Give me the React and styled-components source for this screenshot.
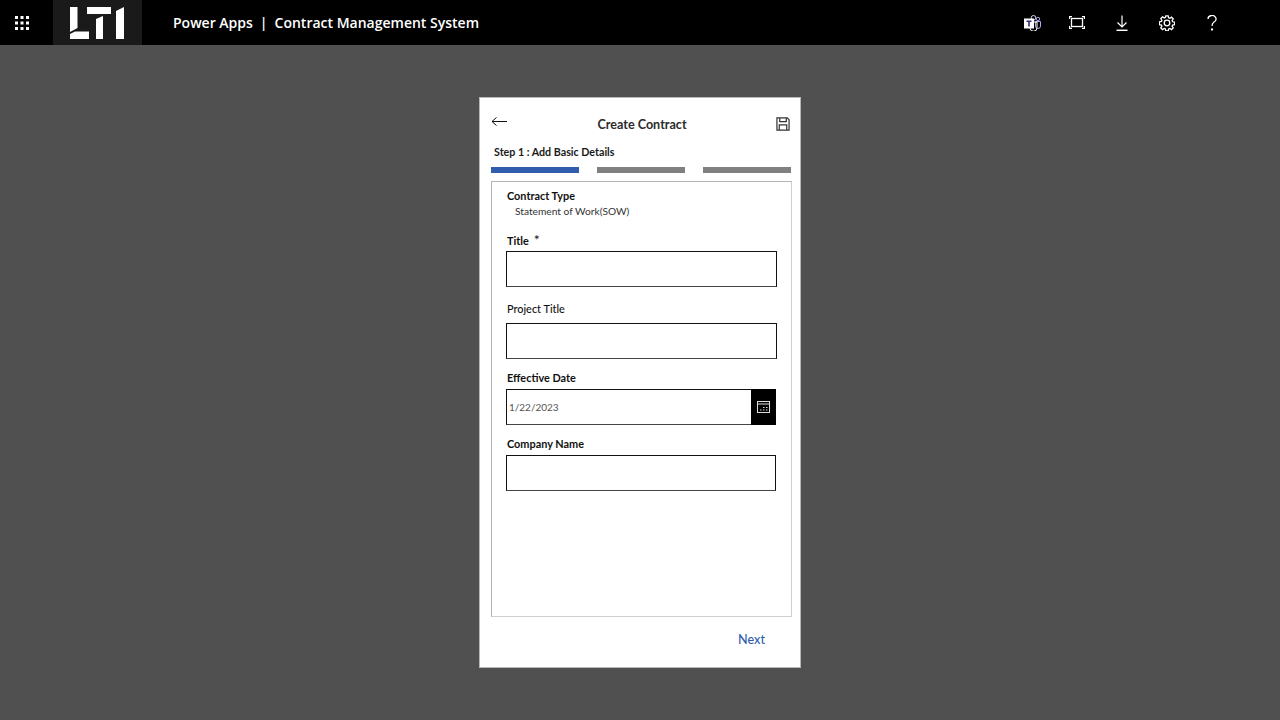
import * as React from "react";
import styled, { createGlobalStyle } from "styled-components";

const GlobalStyle = createGlobalStyle`
  html, body {
    margin: 0;
    padding: 0;
    height: 100%;
    background: #505050;
    font-family: "Lato", "Liberation Sans", sans-serif;
  }
`;

const Page = styled.div`
  width: 1280px;
  height: 720px;
  display: flex;
  flex-direction: column;
  overflow: hidden;
`;

const TopBar = styled.header`
  height: 45px;
  background: #000;
  display: flex;
  align-items: center;
  color: #fff;
  flex-shrink: 0;
`;

const Waffle = styled.div`
  width: 53px;
  height: 45px;
  display: flex;
  align-items: center;
  justify-content: center;
  padding-right: 9px;
  box-sizing: border-box;
`;

const LogoBox = styled.div`
  width: 89px;
  height: 45px;
  background: #1a1a1a;
  display: flex;
  align-items: center;
  justify-content: center;
`;

const AppTitle = styled.div`
  margin-left: 31px;
  font-family: "Open Sans", "Noto Sans", sans-serif;
  font-size: 14px;
  font-weight: 600;
  white-space: nowrap;
  flex: 1;
  padding-bottom: 1px;
`;

const TitleDivider = styled.span`
  margin: 0 7px;
`;

const TopIcons = styled.div`
  display: flex;
  align-items: center;
  gap: 25px;
  margin-right: 58px;
`;

const IconSlot = styled.div`
  width: 20px;
  height: 20px;
  display: flex;
  align-items: center;
  justify-content: center;
`;

const Main = styled.main`
  flex: 1;
  display: flex;
  justify-content: center;
  align-items: flex-start;
  padding-top: 52px;
`;

const Card = styled.section`
  width: 322px;
  height: 571px;
  background: #fff;
  border: 1px solid #b8b8b8;
  box-sizing: border-box;
  padding: 0 9px 0 11px;
  display: flex;
  flex-direction: column;
`;

const CardHeader = styled.div`
  height: 41px;
  display: flex;
  justify-content: space-between;
  align-items: flex-start;
  padding: 19px 1px 0 0;
  box-sizing: border-box;
  position: relative;
`;

const CardTitle = styled.div`
  position: absolute;
  left: 0;
  right: 0;
  top: 19px;
  text-align: center;
  padding-left: 2px;
  font-size: 12.6px;
  line-height: 16px;
  font-weight: 700;
  color: #2b2b2b;
`;

const StepLabel = styled.div`
  margin: 5px 0 0 3px;
  height: 16px;
  font-size: 10.7px;
  line-height: 16px;
  font-weight: 700;
  color: #1a1a1a;
`;

const StepBars = styled.div`
  margin-top: 7px;
  display: flex;
  justify-content: space-between;
`;

const StepBar = styled.div`
  width: 88px;
  height: 6px;
  background: ${(props) => (props.$active ? "#2f5cad" : "#808080")};
`;

const Panel = styled.div`
  margin-top: 8px;
  width: 301px;
  height: 436px;
  box-sizing: border-box;
  border: 1px solid #b4b4b4;
  border-bottom-color: #cfcfcf;
  border-right-color: #cfcfcf;
  padding: 7px 0 0 14px;
  display: flex;
  flex-direction: column;
`;

const FieldLabel = styled.div`
  font-size: 10.9px;
  line-height: 14px;
  height: 14px;
  padding-left: 1px;
  font-weight: ${(props) => (props.$light ? 500 : 700)};
  color: #111;
  margin-top: ${(props) => props.$top || 0}px;
`;

const Required = styled.span`
  margin-left: 5px;
  font-weight: 400;
  font-size: 14px;
`;

const StaticValue = styled.div`
  font-size: 10.2px;
  line-height: 14px;
  margin: 1px 0 0 9px;
  color: #333;
`;

const InputBox = styled.div`
  width: ${(props) => props.$width || 271}px;
  height: 36px;
  box-sizing: border-box;
  border: 1px solid #111;
  border-bottom-color: #444;
  margin-top: ${(props) => props.$top}px;
  background: #fff;
  display: flex;
  align-items: stretch;
`;

const DateValue = styled.div`
  flex: 1;
  font-size: 10px;
  line-height: 34px;
  padding-left: 2px;
  color: #555;
`;

const DateButton = styled.div`
  width: 25px;
  background: #000;
  display: flex;
  align-items: center;
  justify-content: center;
  margin: -1px -1px -1px 0;
`;

const Footer = styled.div`
  display: flex;
  justify-content: flex-end;
  padding: 15px 26px 0 0;
`;

const NextLink = styled.div`
  font-size: 12.6px;
  line-height: 16px;
  font-weight: 500;
  color: #2f5cad;
`;

const WaffleIcon = () => (
  <svg width="16" height="16" viewBox="0 0 16 16" fill="#fff">
    {[1, 6.5, 12].flatMap((y) =>
      [1, 6.5, 12].map((x) => <rect key={`${x}-${y}`} x={x} y={y} width="3" height="3" />)
    )}
  </svg>
);

const LtiLogo = () => (
  <svg width="55" height="32" viewBox="0 0 55 32" fill="#fff">
    <path d="M0 0h7.500v21L0 25z" />
    <path d="M0 27l5-2.500h14V32H0z" />
    <path d="M17 0h24v7H17z" />
    <path d="M26 12l7-3v23h-7z" />
    <path d="M46 4l8-4v32h-8z" />
  </svg>
);

const TeamsIcon = () => (
  <svg width="17" height="16" viewBox="0 0 17 16">
    <circle cx="9.500" cy="2.800" r="2.300" fill="none" stroke="#d6d6f5" />
    <circle cx="14" cy="4" r="1.700" fill="none" stroke="#a9a9e6" />
    <path d="M11.500 6.500h5v4.500a2.500 2.500 0 0 1-5 0z" fill="none" stroke="#a9a9e6" />
    <path d="M5.500 7h7.500v5.500a3.500 3.500 0 0 1-7 .500z" fill="none" stroke="#fff" />
    <rect x="0" y="3.500" width="10" height="10" fill="#fff" />
    <path d="M2.500 5.500h5v1.500H5.800v4.500H4.200V7H2.500z" fill="#2b2b80" />
  </svg>
);

const FocusIcon = () => (
  <svg width="16" height="13" viewBox="0 0 16 13" fill="none" stroke="#fff" strokeWidth="1.300">
    <rect x="2.500" y="2.500" width="11" height="8" />
    <path d="M0.500 3V0.500H3M13 0.500h2.500V3M15.500 10v2.500H13M3 12.500H0.500V10" />
  </svg>
);

const DownloadIcon = () => (
  <svg width="12" height="16" viewBox="0 0 12 16" fill="none" stroke="#fff" strokeWidth="1.200">
    <path d="M6 0.500v11M1.500 7.500L6 12l4.500-4.500" />
    <path d="M0.500 15.300h11" strokeWidth="1.500" />
  </svg>
);

const GearIcon = () => (
  <svg width="16" height="16" viewBox="0 0 16 16" fill="none" stroke="#fff" strokeWidth="1.300">
    <circle cx="8" cy="8" r="2.800" />
    <path d="M6.800 0.800h2.400l.4 2 1.200.5 1.700-1.100 1.700 1.700-1.100 1.700.5 1.200 2 .4v2.400l-2 .4-.5 1.200 1.100 1.700-1.700 1.700-1.700-1.100-1.200.5-.4 2H6.800l-.4-2-1.200-.5-1.700 1.100-1.700-1.700 1.100-1.700-.5-1.200-2-.4V6.800l2-.4.5-1.200-1.100-1.700 1.700-1.700 1.700 1.100 1.200-.5z" />
  </svg>
);

const HelpIcon = () => (
  <svg width="10" height="16" viewBox="0 0 10 16" fill="none" stroke="#fff" strokeWidth="1.300">
    <path d="M1 4a4 3.500 0 1 1 6 3c-1.400.9-2 1.500-2 4" />
    <circle cx="5" cy="14.500" r="0.500" fill="#fff" />
  </svg>
);

const BackArrow = () => (
  <svg width="16" height="10" viewBox="0 0 16 10" fill="none" stroke="#111">
    <path d="M16 4.500H1M5.500 0.500L1 4.500l4.500 4" />
  </svg>
);

const SaveIcon = () => (
  <svg width="14" height="14" viewBox="0 0 15 15" fill="none" stroke="#333" strokeWidth="1.300">
    <path d="M1 1h11l2 2v11H1z" />
    <path d="M4 1v4h7V1M3.500 14V8.500h8V14" />
  </svg>
);

const CalendarIcon = () => (
  <svg width="13" height="12" viewBox="0 0 13 12" fill="none" stroke="#ddd">
    <rect x="0.500" y="0.500" width="12" height="11" />
    <path d="M0.500 3h12" />
    <path d="M6 6.500h1.500M9 6.500h1.500M3 9h1.500M6 9h1.500M9 9h1.500" />
  </svg>
);

export default function App() {
  return (
    <Page>
      <GlobalStyle />
      <TopBar>
        <Waffle>
          <WaffleIcon />
        </Waffle>
        <LogoBox>
          <LtiLogo />
        </LogoBox>
        <AppTitle>
          Power Apps<TitleDivider>|</TitleDivider>Contract Management System
        </AppTitle>
        <TopIcons>
          <IconSlot><TeamsIcon /></IconSlot>
          <IconSlot><FocusIcon /></IconSlot>
          <IconSlot><DownloadIcon /></IconSlot>
          <IconSlot><GearIcon /></IconSlot>
          <IconSlot><HelpIcon /></IconSlot>
        </TopIcons>
      </TopBar>
      <Main>
        <Card>
          <CardHeader>
            <BackArrow />
            <CardTitle>Create Contract</CardTitle>
            <SaveIcon />
          </CardHeader>
          <StepLabel>Step 1 : Add Basic Details</StepLabel>
          <StepBars>
            <StepBar $active />
            <StepBar />
            <StepBar />
          </StepBars>
          <Panel>
            <FieldLabel>Contract Type</FieldLabel>
            <StaticValue>Statement of Work(SOW)</StaticValue>
            <FieldLabel $top={15}>
              Title<Required>*</Required>
            </FieldLabel>
            <InputBox $top={4} />
            <FieldLabel $light $top={15}>Project Title</FieldLabel>
            <InputBox $top={7} />
            <FieldLabel $top={12}>Effective Date</FieldLabel>
            <InputBox $top={4} $width={270}>
              <DateValue>1/22/2023</DateValue>
              <DateButton>
                <CalendarIcon />
              </DateButton>
            </InputBox>
            <FieldLabel $top={12}>Company Name</FieldLabel>
            <InputBox $top={4} $width={270} />
          </Panel>
          <Footer>
            <NextLink>Next</NextLink>
          </Footer>
        </Card>
      </Main>
    </Page>
  );
}
